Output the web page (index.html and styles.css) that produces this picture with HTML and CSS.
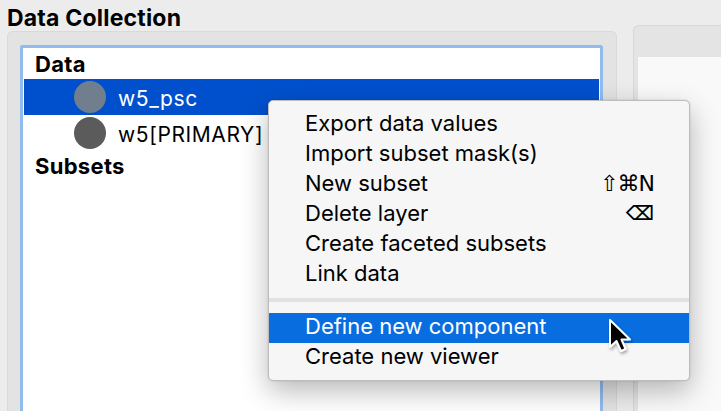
FILE: index.html
```html
<!DOCTYPE html>
<html>
<head>
<meta charset="utf-8">
<link rel="stylesheet" href="styles.css">
</head>
<body>
<div class="app">
  <div class="left">
    <div class="title">Data Collection</div>
    <div class="panel">
      <div class="list">
        <div class="head">Data</div>
        <div class="row selected"><span class="dot dot-a"></span><span class="label">w5_psc</span></div>
        <div class="row"><span class="dot dot-b"></span><span class="label">w5[PRIMARY]</span></div>
        <div class="head">Subsets</div>
      </div>
    </div>
  </div>
  <div class="right">
    <div class="right-inner"></div>
  </div>
</div>

<div class="menu">
  <div class="item"><span>Export data values</span></div>
  <div class="item"><span>Import subset mask(s)</span></div>
  <div class="item"><span>New subset</span><span class="key">⇧⌘N</span></div>
  <div class="item"><span>Delete layer</span><span class="key key-del">⌫</span></div>
  <div class="item"><span>Create faceted subsets</span></div>
  <div class="item"><span>Link data</span></div>
  <div class="sep"></div>
  <div class="item active"><span>Define new component</span></div>
  <div class="item"><span>Create new viewer</span></div>
</div>

<svg class="cursor" width="30" height="40" viewBox="0 0 30 40">
  <defs>
    <filter id="sh" x="-30%" y="-30%" width="160%" height="160%">
      <feDropShadow dx="1" dy="2" stdDeviation="1.5" flood-color="#000" flood-opacity="0.35"/>
    </filter>
  </defs>
  <path d="M3 3 L3 30 L9.5 24 L14 34 L18.5 32 L14.5 22.5 L23 22.5 Z" fill="#000" stroke="#fff" stroke-width="2" stroke-linejoin="round" filter="url(#sh)"/>
</svg>
</body>
</html>
```
FILE: styles.css
```css
html, body {
  margin: 0;
  padding: 0;
}
body {
  width: 721px;
  height: 411px;
  overflow: hidden;
  background: #ececec;
  font-family: "Inter", "Liberation Sans", "DejaVu Sans", sans-serif;
  color: #000;
  position: relative;
}
.app {
  display: flex;
  align-items: flex-start;
  height: 411px;
}
.left {
  width: 610px;
  padding-left: 7px;
  flex: none;
}
.title {
  margin-top: 6px;
  height: 25px;
  font-size: 23px;
  line-height: 24px;
  font-weight: 700;
  letter-spacing: 0.2px;
}
.panel {
  box-sizing: border-box;
  height: 380px;
  background: #e3e3e3;
  border: 1px solid #d9d9d9;
  border-bottom: none;
  border-radius: 6px 6px 0 0;
  padding: 13px 13px 0 12px;
}
.list {
  box-sizing: border-box;
  height: 367px;
  background: #fff;
  border: 3px solid #90bcee;
  border-bottom: none;
  border-radius: 3px 3px 0 0;
  padding: 1px 1px 0 1px;
}
.head {
  height: 30px;
  line-height: 30px;
  padding-left: 11px;
  font-size: 22px;
  font-weight: 700;
  letter-spacing: 0.3px;
}
.row {
  height: 36px;
  display: flex;
  align-items: center;
  padding-left: 50px;
  font-size: 21px;
}
.row.selected {
  background: #0050cd;
  color: #fff;
}
.label {
  padding-top: 3px;
  margin-left: 12px;
  letter-spacing: 0.6px;
}
.dot {
  width: 32px;
  height: 32px;
  border-radius: 50%;
  flex: none;
}
.dot-a { background: #707e8d; }
.dot-b { background: #5b5b5b; }

.right {
  flex: 1;
  margin-left: 16px;
  margin-top: 25px;
  box-sizing: border-box;
  height: 386px;
  background: #e4e4e4;
  border: 1px solid #d8d8d8;
  border-right: none;
  border-bottom: none;
  border-radius: 6px 0 0 0;
  padding: 31px 0 0 4px;
}
.right-inner {
  height: 100%;
  background: #f9f9f9;
}

.menu {
  position: absolute;
  left: 268px;
  top: 100px;
  width: 422px;
  height: 281px;
  box-sizing: border-box;
  background: #f6f6f6;
  border: 1px solid #bdbdbd;
  border-radius: 5px;
  box-shadow: 0 10px 28px rgba(0, 0, 0, 0.28), 0 0 2px rgba(0,0,0,0.15);
  padding: 9px 0 7px 0;
  font-size: 22px;
}
.item {
  height: 30px;
  box-sizing: border-box;
  line-height: 27px;
  padding: 0 35px 3px 36px;
  display: flex;
  justify-content: space-between;
  white-space: nowrap;
}
.item.active {
  background: #086ddf;
  color: #fff;
}
.sep {
  height: 4px;
  margin: 8px 0 11px 0;
  background: #e2e2e2;
}
.key {
  font-family: "DejaVu Sans", sans-serif;
  font-size: 22px;
  letter-spacing: -1px;
}
.key-del {
  font-size: 20px;
  font-weight: 700;
  letter-spacing: 0;
}
.cursor {
  position: absolute;
  left: 607px;
  top: 317px;
}
```
